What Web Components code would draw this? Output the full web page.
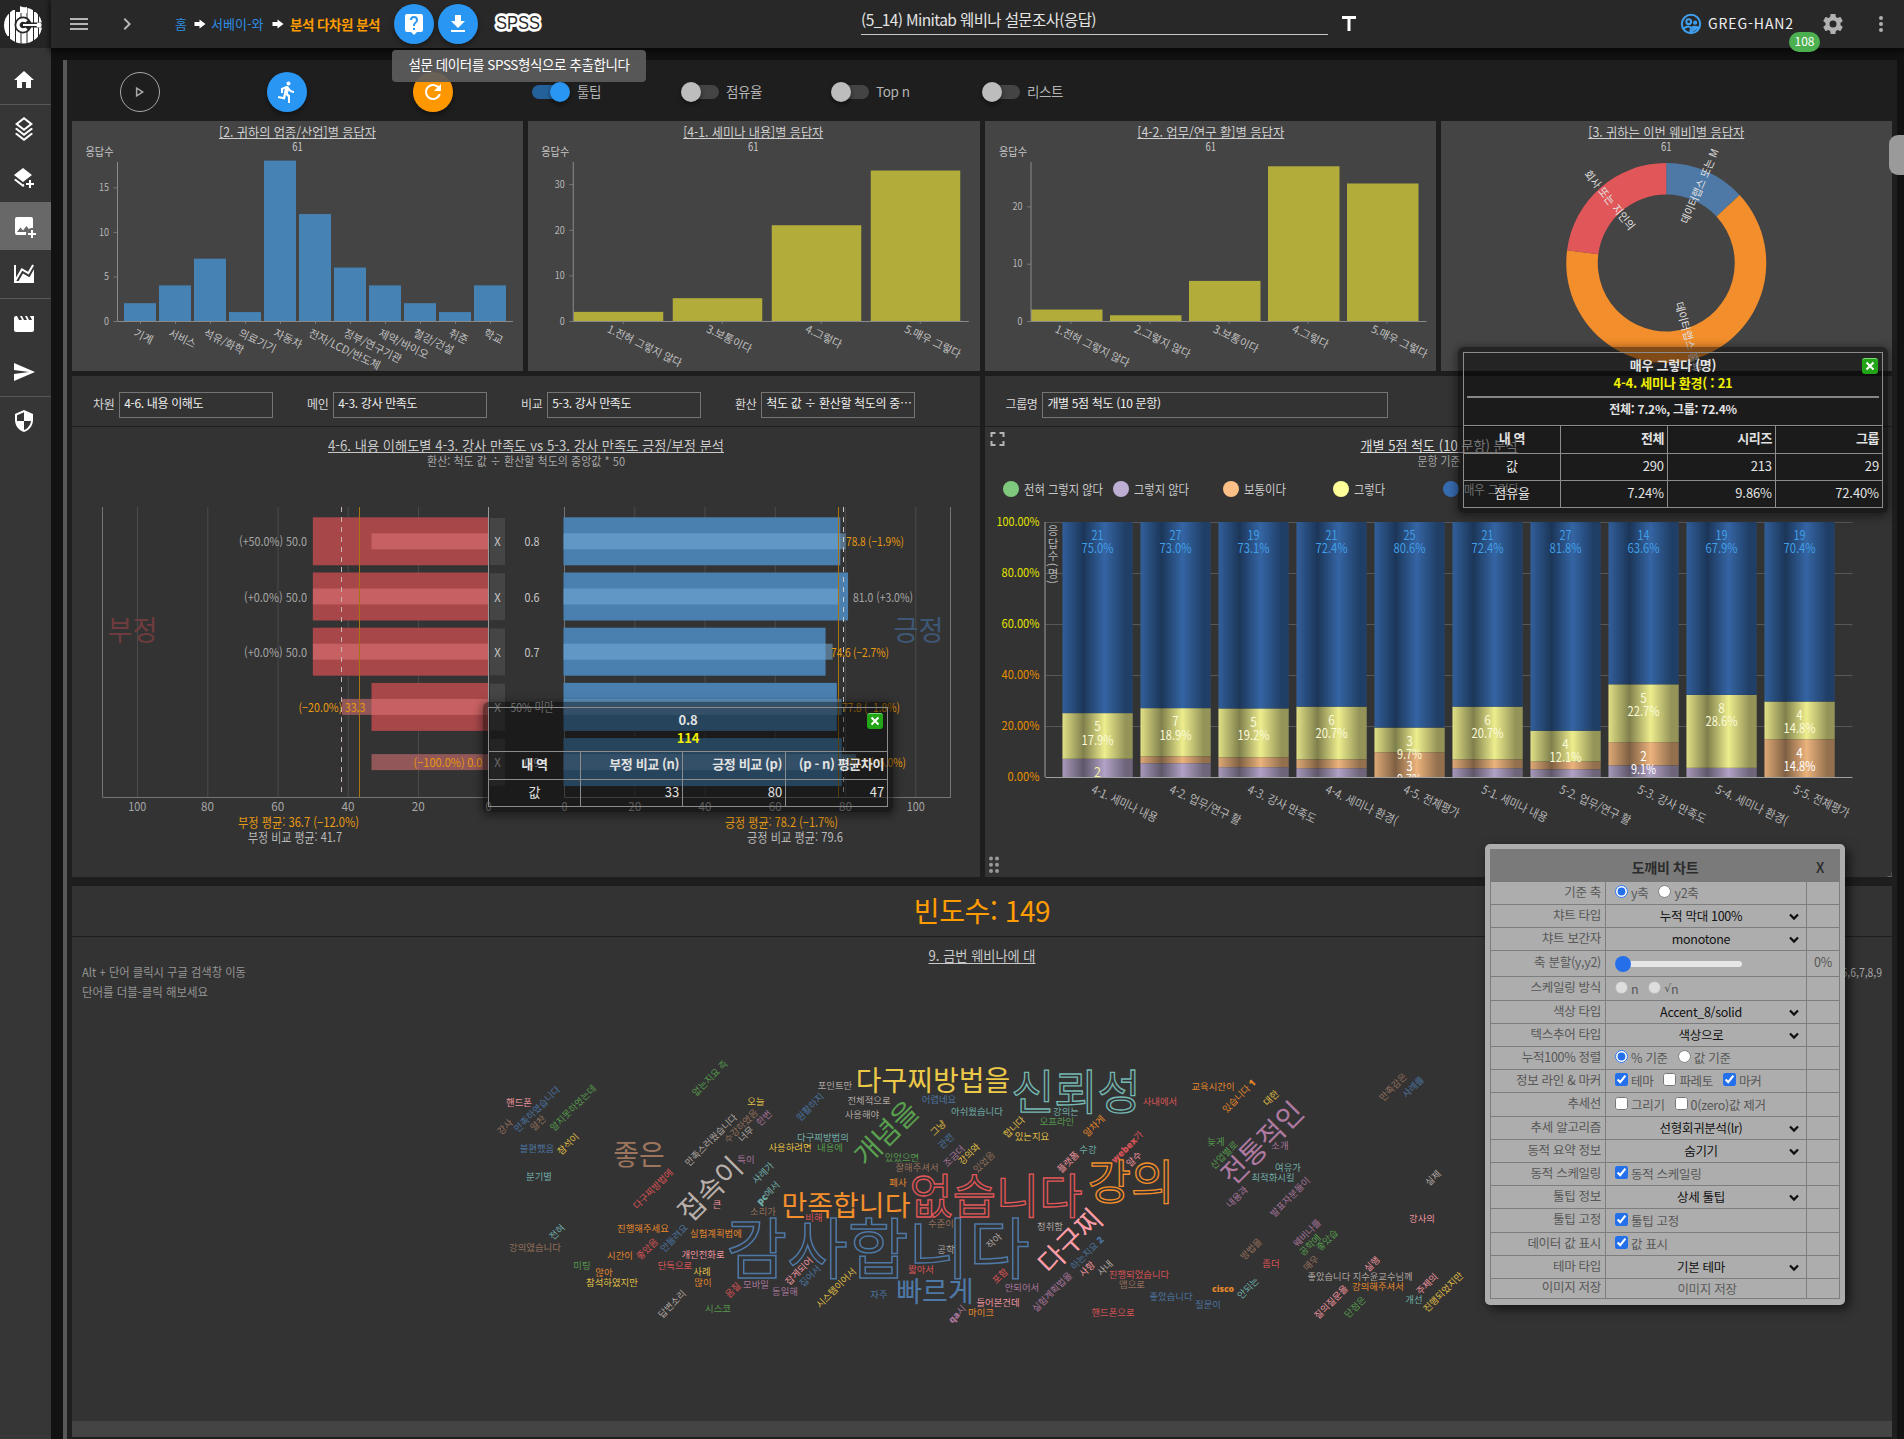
<!DOCTYPE html>
<html lang="ko">
<head>
<meta charset="utf-8">
<title>분석 다차원 분석</title>
<style>
html,body{margin:0;height:1439px;overflow:hidden;background:#121212;font-family:"Noto Sans CJK KR","Noto Sans",sans-serif;color:#fff}
</style>
</head>
<body>
<app-root></app-root>
<script>
const FONT='font-family:"Noto Sans CJK KR","Noto Sans",sans-serif;';
const ICONS={
home:'M10,20V14H14V20H19V12H22L12,3L2,12H5V20H10Z',
layers:'M12,0L3,7L4.63,8.27L12,14L19.36,8.27L21,7L12,0M12,2.53L17.74,7L12,11.47L6.26,7ZM19.37,10.73L12,16.47L4.62,10.74L3,12L12,19L21,12L19.37,10.73M19.37,15.73L12,21.47L4.62,15.74L3,17L12,24L21,17L19.37,15.73Z',
layersPlus:'M17,14H19V17H22V19H19V22H17V19H14V17H17V14M11,16L2,9L11,2L20,9L11,16M11,18.54L12,17.75V18C12,18.71 12.12,19.39 12.35,20L11,21.06L2,14.06L3.62,12.79L11,18.54Z',
imagePlus:'M5,3A2,2 0 0,0 3,5V19A2,2 0 0,0 5,21H14.09C14.03,20.67 14,20.34 14,20C14,19.32 14.12,18.64 14.35,18H5L8.5,13.5L11,16.5L14.5,12L16.73,14.97C17.7,14.34 18.84,14 20,14C20.34,14 20.67,14.03 21,14.09V5C21,3.89 20.1,3 19,3H5M19,16V19H16V21H19V24H21V21H24V19H21V16H19Z',
chart:'M17.45,15.18L22,7.31V21H2V3H4V15.54L9.5,6L16,9.78L20.24,2.45L21.97,3.45L16.74,12.5L10.23,8.75L4.31,19H6.57L10.96,11.44L17.45,15.18Z',
movie:'M18,4L20,8H17L15,4H13L15,8H12L10,4H8L10,8H7L5,4H4A2,2 0 0,0 2,6V18A2,2 0 0,0 4,20H20A2,2 0 0,0 22,18V4H18Z',
send:'M2,21L23,12L2,3V10L17,12L2,14V21Z',
shield:'M12,12H19C18.47,16.11 15.72,19.78 12,21V12H5V6.3L12,3.19M12,1L3,5V11C3,16.55 6.84,21.73 12,23C17.16,21.73 21,16.55 21,11V5L12,1Z',
menu:'M3,6H21V8H3V6M3,11H21V13H3V11M3,16H21V18H3V16Z',
chevron:'M8.59,16.58L13.17,12L8.59,7.41L10,6L16,12L10,18L8.59,16.58Z',
help:'M19,2H5A2,2 0 0,0 3,4V18A2,2 0 0,0 5,20H9L12,23L15,20H19A2,2 0 0,0 21,18V4A2,2 0 0,0 19,2M13,18H11V16H13V18M15.07,10.25L14.17,11.17C13.45,11.89 13,12.5 13,14H11V13.5C11,12.39 11.45,11.39 12.17,10.67L13.41,9.41C13.78,9.05 14,8.55 14,8A2,2 0 0,0 12,6A2,2 0 0,0 10,8H8A4,4 0 0,1 12,4A4,4 0 0,1 16,8C16,8.88 15.64,9.67 15.07,10.25Z',
download:'M5,20H19V18H5M19,9H15V3H9V9H5L12,16L19,9Z',
run:'M13.49,5.48C14.59,5.48 15.49,4.58 15.49,3.48C15.49,2.38 14.59,1.48 13.49,1.48C12.39,1.48 11.49,2.38 11.49,3.48C11.49,4.58 12.39,5.48 13.49,5.48M9.89,19.38L10.89,14.98L12.99,16.98V22.98H14.99V15.48L12.89,13.48L13.49,10.48C14.79,11.98 16.79,12.98 18.99,12.98V10.98C17.09,10.98 15.49,9.98 14.69,8.58L13.69,6.98C13.29,6.38 12.69,5.98 11.99,5.98C11.69,5.98 11.49,6.08 11.19,6.08L5.99,8.28V12.98H7.99V9.58L9.79,8.88L8.19,16.98L3.29,15.98L2.89,17.98L9.89,19.38Z',
refresh:'M17.65,6.35C16.2,4.9 14.21,4 12,4A8,8 0 0,0 4,12A8,8 0 0,0 12,20C15.73,20 18.84,17.45 19.73,14H17.65C16.83,16.33 14.61,18 12,18A6,6 0 0,1 6,12A6,6 0 0,1 12,6C13.66,6 15.14,6.69 16.22,7.78L13,11H20V4L17.65,6.35Z',
play:'M8.5,8.64L13.77,12L8.5,15.36V8.64M6.5,5V19L17.5,12',
cog:'M12,15.5A3.5,3.5 0 0,1 8.5,12A3.5,3.5 0 0,1 12,8.5A3.5,3.5 0 0,1 15.5,12A3.5,3.5 0 0,1 12,15.5M19.43,12.97C19.47,12.65 19.5,12.33 19.5,12C19.5,11.67 19.47,11.34 19.43,11L21.54,9.37C21.73,9.22 21.78,8.95 21.66,8.73L19.66,5.27C19.54,5.05 19.27,4.96 19.05,5.05L16.56,6.05C16.04,5.66 15.5,5.32 14.87,5.07L14.5,2.42C14.46,2.18 14.25,2 14,2H10C9.75,2 9.54,2.18 9.5,2.42L9.13,5.07C8.5,5.32 7.96,5.66 7.44,6.05L4.95,5.05C4.73,4.96 4.46,5.05 4.34,5.27L2.34,8.73C2.21,8.95 2.27,9.22 2.46,9.37L4.57,11C4.53,11.34 4.5,11.67 4.5,12C4.5,12.33 4.53,12.65 4.57,12.97L2.46,14.63C2.27,14.78 2.21,15.05 2.34,15.27L4.34,18.73C4.46,18.95 4.73,19.03 4.95,18.95L7.44,17.94C7.96,18.34 8.5,18.68 9.13,18.93L9.5,21.58C9.54,21.82 9.75,22 10,22H14C14.25,22 14.46,21.82 14.5,21.58L14.87,18.93C15.5,18.67 16.04,18.34 16.56,17.94L19.05,18.95C19.27,19.03 19.54,18.95 19.66,18.73L21.66,15.27C21.78,15.05 21.73,14.78 21.54,14.63L19.43,12.97Z',
dots:'M12,16A2,2 0 0,1 14,18A2,2 0 0,1 12,20A2,2 0 0,1 10,18A2,2 0 0,1 12,16M12,10A2,2 0 0,1 14,12A2,2 0 0,1 12,14A2,2 0 0,1 10,12A2,2 0 0,1 12,10M12,4A2,2 0 0,1 14,6A2,2 0 0,1 12,8A2,2 0 0,1 10,6A2,2 0 0,1 12,4Z',
title:'M5,4V7H10.5V19H13.5V7H19V4H5Z',
arrow:'M1,8H11V3L23,12L11,21V16H1Z',
full:'M5,5H10V7H7V10H5V5M14,5H19V10H17V7H14V5M17,14H19V19H14V17H17V14M10,17V19H5V14H7V17H10Z'
};
const define=(name,render)=>customElements.define(name,class extends HTMLElement{
  connectedCallback(){
    if(this.shadowRoot)return;
    this.attachShadow({mode:'open'}).innerHTML=render(this);
  }
});
const esc=s=>String(s).replace(/&/g,'&amp;').replace(/</g,'&lt;');
/* Text helper: y is the visual middle of the line, len fixes the drawn width. */
const T=(x,y,s,o={})=>{
  const fs=o.fs||12, a=o.a||'middle';
  const tr=o.rot?` transform="rotate(${o.rot} ${x} ${y})"`:'';
  return `<text x="${x}" y="${(y+fs*.37).toFixed(2)}" font-size="${fs}" text-anchor="${a}" fill="${o.f||'#c8c8c8'}"${o.w?` font-weight="${o.w}"`:''}${o.len?` textLength="${o.len}" lengthAdjust="spacingAndGlyphs"`:''}${tr}${o.x||''}>${esc(s)}</text>`;
};
const L=(x1,y1,x2,y2,c,w=1,x='')=>`<line x1="${x1}" y1="${y1}" x2="${x2}" y2="${y2}" stroke="${c}" stroke-width="${w}" ${x}/>`;
const R=(x,y,w,h,f,x2='')=>`<rect x="${x}" y="${y}" width="${w}" height="${h}" fill="${f}" ${x2}/>`;
const svgBox=(x,y,w,h,body)=>`<style>:host{display:block}svg{display:block;${FONT}}</style><svg width="${w}" height="${h}" viewBox="${x} ${y} ${w} ${h}">${body}</svg>`;

define('ui-icon',el=>{
  const s=el.getAttribute('size')||24;
  return `<style>:host{display:block;line-height:0;flex:none}</style><svg width="${s}" height="${s}" viewBox="0 0 24 24" fill="currentColor"><path fill-rule="evenodd" d="${ICONS[el.getAttribute('name')]}"/></svg>`;
});
define('round-button',()=>`<style>:host{display:flex;width:40px;height:40px;border-radius:50%;align-items:center;justify-content:center;background:var(--c,#2a96f3);color:#fff;box-shadow:0 3px 5px rgba(0,0,0,.35);box-sizing:border-box;flex:none}</style><slot></slot>`);

define('brand-logo',()=>`<style>:host{display:block;width:51px;height:48px;background:#262626}svg{display:block}</style>
<svg width="51" height="48" viewBox="0 0 51 48"><defs><clipPath id="f"><ellipse cx="23" cy="25.5" rx="19" ry="18"/></clipPath></defs>
<g clip-path="url(#f)" fill="#fff"><path d="M4 14h5v22H4zM10 10h5v32h-5zM16 12h4.500v32H16zM21.500 12h5v32h-5zM27.500 8h5.500v36h-5.500zM34 12h4v28h-4zM39 16h4v20h-4z"/></g>
<path d="M20 13V6q3 2 7 1v6z" fill="#fff"/>
<circle cx="23" cy="25" r="8.500" fill="#262626"/><path d="M26.500 21.500a5 5 0 1 0 0 7" fill="none" stroke="#fff" stroke-width="3.400"/>
<path d="M23 22.500h20v5H23z" fill="#262626"/><path d="M23 25h14" stroke="#fff" stroke-width="2"/><circle cx="39" cy="25" r="2.600" fill="#fff"/></svg>`);

define('top-bar',()=>`<style>
:host{display:flex;height:48px;background:#282828;align-items:center;box-shadow:0 2px 6px 2px rgba(0,0,0,.55);position:relative;z-index:3;${FONT}}
.left{display:flex;align-items:center;width:810px}
.menu{margin-left:16px;color:#b5b5b5}.chev{margin-left:24px;color:#b5b5b5}
.crumb{display:flex;align-items:center;margin-left:36px;font-size:13px;line-height:20px;color:#2d8de0;white-space:nowrap;width:218px}
.crumb ui-icon{color:#fff}.crumb b{color:#ff9d00;font-size:13.500px;letter-spacing:-.5px}
.btns{display:flex;gap:4px;margin-left:1px}
.spss{margin-left:11px;display:block}
.title{width:467px;height:25px;border-bottom:1px solid #c8c8c8;font-size:15.500px;line-height:20px;color:#e4e4e4;letter-spacing:-.6px;margin-top:-4px;white-space:nowrap}
.user{display:flex;align-items:center;font-size:14px;letter-spacing:.9px;color:#eee;margin-left:319px;width:118px;white-space:nowrap;gap:6px;line-height:20px}
.user span{margin-top:-2px}
.tip{position:absolute;left:341px;top:50px;width:254px;height:32px;border-radius:4px;background:rgba(92,92,92,.92);font-size:13.500px;line-height:29px;text-align:center;color:#fff;letter-spacing:-.4px;white-space:nowrap}
.badge{position:absolute;left:1738px;top:32px;width:31px;height:20px;border-radius:10px;background:#4caf50;font-size:12px;line-height:17px;text-align:center}
</style>
<div class="left"><ui-icon class="menu" name="menu"></ui-icon><ui-icon class="chev" name="chevron"></ui-icon>
<div class="crumb"><span style="width:19px">홈</span><ui-icon name="arrow" size="12"></ui-icon><span style="margin:0 6px 0 5px;width:55px;letter-spacing:0">서베이-와</span><ui-icon name="arrow" size="12"></ui-icon><b style="margin-left:6px">분석 다차원 분석</b></div>
<div class="btns"><round-button><ui-icon name="help"></ui-icon></round-button><round-button><ui-icon name="download"></ui-icon></round-button></div>
<svg class="spss" width="58" height="28" viewBox="0 0 58 28"><text x="29" y="19" text-anchor="middle" textLength="44" lengthAdjust="spacingAndGlyphs" font-family="Liberation Sans" font-size="19" fill="#282828" stroke="#fff" stroke-width="5.500" stroke-linejoin="round" paint-order="stroke">SPSS</text></svg></div>
<div class="title">(5_14) Minitab 웨비나 설문조사(응답)</div>
<ui-icon name="title" size="24" style="margin-left:9px"></ui-icon>
<div class="user"><svg width="22" height="22" viewBox="0 0 24 24" fill="none" stroke="#3f9fee" stroke-width="2.200"><circle cx="12" cy="12" r="10"/><circle cx="9.500" cy="9.500" r="2.600"/><circle cx="16.500" cy="10.500" r="1.200"/><path d="M4 17q5-4 8-1M12 22q-2-6 3-7q5 0 6 2" /><path d="M13 21q0-6 7-4" fill="#3f9fee"/></svg><span>GREG-HAN2</span></div>
<ui-icon name="cog" style="margin-left:23px;color:#b0b0b0"></ui-icon><ui-icon name="dots" style="margin-left:24px;color:#b0b0b0"></ui-icon>
<div class="tip">설문 데이터를 SPSS형식으로 추출합니다</div><div class="badge">108</div>`);

define('side-bar',()=>{
  const items=['home','|','layers','layersPlus','imagePlus*','chart','|','movie','send','|','shield'];
  return `<style>:host{display:flex;flex-direction:column;background:#363636;padding-top:8px;width:51px;box-sizing:border-box}
.i{height:48.300px;display:flex;align-items:center;justify-content:center;padding-right:3px}.on{background:#686868}hr{border:0;height:1px;background:#575757;margin:0;width:100%}</style>`+
  items.map(n=>n==='|'?'<hr>':`<div class="i${n.endsWith('*')?' on':''}"><ui-icon name="${n.replace('*','')}"></ui-icon></div>`).join('');
});

define('toggle-switch',el=>`<style>:host{display:flex;align-items:center;font-size:13.500px;color:#b4b4b4;letter-spacing:-.4px;${FONT}line-height:20px;white-space:nowrap;gap:7px}
.t{width:38px;height:20px;display:flex;align-items:center;position:relative}.k{position:absolute;left:8px;right:0;height:14px;border-radius:7px;background:#444}
.b{position:relative;width:20px;height:20px;border-radius:50%;background:#bdbdbd;box-shadow:0 2px 4px rgba(0,0,0,.5)}.l{margin-top:-3px}
:host([on]) .k{left:0;right:8px;background:#24619b}:host([on]) .b{margin-left:18px;background:#2a96f3}</style><span class="t"><span class="k"></span><span class="b"></span></span><span class="l"><slot></slot></span>`);

define('tool-row',()=>`<style>:host{display:flex;height:61px;align-items:center;padding:3px 0 0 48px;box-sizing:border-box}
.play{background:none;border:1px solid #a8a8a8;color:#a8a8a8;box-shadow:none}</style>
<round-button class="play"><ui-icon name="play" size="18"></ui-icon></round-button>
<round-button style="margin-left:107px"><ui-icon name="run"></ui-icon></round-button>
<round-button style="margin-left:106px;--c:#ff9800"><ui-icon name="refresh"></ui-icon></round-button>
<toggle-switch on style="margin-left:79px;width:149px">툴팁</toggle-switch><toggle-switch style="width:150px">점유율</toggle-switch><toggle-switch style="width:151px">Top n</toggle-switch><toggle-switch>리스트</toggle-switch>`);

const histogram=c=>{
  let s=T(c.mid,132,c.title,{fs:13,len:c.tl,f:'#cfcfcf'})+L(c.mid-c.tl/2,138.500,c.mid+c.tl/2,138.500,'#cfcfcf')+T(c.mid,146.500,'61',{fs:11.500,len:10.500});
  s+=T(c.ax-32,152,'응답수',{fs:11,a:'start',len:28});
  for(const t of c.ticks){const y=321-t*c.k;s+=L(c.ax-4,y+.5,c.ax,y+.5,'#777')+T(c.ax-8.500,y,t,{fs:10,a:'end',f:'#b8b8b8',len:t>9?10:5});}
  c.v.forEach((v,i)=>{
    const x=c.x0+i*c.step,h=v*c.k;
    s+=R(x,321-h,c.w,h,c.color)+L(c.t0+i*c.step,321,c.t0+i*c.step,324,'#777')+T(c.t0+i*c.step-c.lo,c.lo>9?328:332,c.names[i],{fs:11,a:'start',rot:26,f:'#c0c0c0',len:c.lens[i]});
  });
  return s+L(c.ax,162,c.ax,321,'#8a8a8a')+L(c.ax,321.500,c.end,321.500,'#8a8a8a');
};
define('chart-industry',()=>svgBox(72,121,451.25,250,histogram({mid:297.500,title:'[2. 귀하의 업종/산업]별 응답자',tl:157,ax:117.500,ticks:[0,5,10,15],k:8.91,v:[2,4,7,1,18,12,6,4,2,1,4],x0:124,step:35,w:32,t0:140.500,lo:6,end:513,color:'#4682b4',names:['기계','서비스','석유/화학','의료기기','자동차','전자/LCD/반도체','정부/연구기관','제약/바이오','철강/건설','취준','학교'],lens:[20,29,43,40,30,78,63,54,43,20,20]})));
define('chart-seminar',()=>svgBox(528.25,121,451.25,250,histogram({mid:753.500,title:'[4-1. 세미나 내용]별 응답자',tl:140,ax:573.500,ticks:[0,10,20,30],k:4.56,v:[2,5,21,33],x0:574,step:99,w:89.500,t0:623.500,lo:15,end:969,color:'#b2ad3a',names:['1.전혀 그렇지 않다','3.보통이다','4.그렇다','5.매우 그렇다'],lens:[81,49,39,61]})));
define('chart-work',()=>svgBox(984.5,121,451.25,250,histogram({mid:1210.300,title:'[4-2. 업무/연구 활]별 응답자',tl:147,ax:1030.500,ticks:[0,10,20],k:5.73,v:[2,1,7,27,24],x0:1030.500,step:79,w:71.500,t0:1070.500,lo:15,end:1426,color:'#b2ad3a',names:['1.전혀 그렇지 않다','2.그렇지 않다','3.보통이다','4.그렇다','5.매우 그렇다'],lens:[81,61,49,39,61]})));
define('chart-donut',()=>{
  const cx=1666,cy=263,ro=100,ri=68.5,n=61;let a=0,s='';
  const P=(t,r)=>{const q=t/n*2*Math.PI;return `${(cx+r*Math.sin(q)).toFixed(2)} ${(cy-r*Math.cos(q)).toFixed(2)}`};
  for(const [v,c] of [[8,'#4e79a7'],[39,'#f28e2b'],[14,'#e15759']]){
    const b=a+v,l=v>n/2?1:0;
    s+=`<path fill="${c}" d="M${P(a,ro)}A${ro} ${ro} 0 ${l} 1 ${P(b,ro)}L${P(b,ri)}A${ri} ${ri} 0 ${l} 0 ${P(a,ri)}Z"/>`;a=b;
  }
  s+=T(1666,132,'[3. 귀하는 이번 웨비]별 응답자',{fs:13,len:156,f:'#cfcfcf'})+L(1588,138.5,1744,138.5,'#cfcfcf')+T(1666,146.5,'61',{fs:11.5,len:10.5});
  s+=T(1699.5,186,'데이터랩스 또는 M',{fs:11,rot:-67,f:'#e0e0e0',len:80})+T(1609.5,200,'회사 또는 지인의',{fs:11,rot:51,f:'#e0e0e0',len:73})+T(1688,337,'데이터랩스 홈페',{fs:11,rot:75,f:'#e0e0e0',len:72});
  return svgBox(1440.75,121,451.25,250,s);
});

define('filter-field',el=>`<style>:host{display:flex;align-items:center;gap:5px;font-size:12px;color:#d8d8d8;letter-spacing:-.4px;white-space:nowrap;${FONT}}
label{line-height:20px;margin-top:-2px}div{box-sizing:border-box;height:26px;border:1px solid #757575;padding:0 4px;line-height:20px;color:#eee;letter-spacing:-.35px;width:${el.getAttribute('w')}px}</style><label>${el.getAttribute('label')}</label><div><slot></slot></div>`);

define('chart-diverging',()=>{
  const k=3.513,x0=488.5,r0=564.5,O='#e69a12';let s='';
  s+=T(526,446,'4-6. 내용 이해도별 4-3. 강사 만족도 vs 5-3. 강사 만족도 긍정/부정 분석',{fs:14,len:396})+L(328,452.5,724,452.5,'#c8c8c8');
  s+=T(526,461.5,'환산: 척도 값 ÷ 환산할 척도의 중앙값 * 50',{fs:12,len:198,f:'#a6a6a6'});
  for(const g of [20,40,60,80,100]) s+=L(x0-g*k+.3,507,x0-g*k+.3,797,'#4b4b4b')+L(r0+g*k,507,r0+g*k,797,'#4b4b4b');
  s+=L(102.5,507,102.5,797,'#757575')+L(102.5,797.5,488.5,797.5,'#757575')+L(564.5,507,564.5,797,'#757575')+L(564.5,797.5,951,797.5,'#757575')+L(950.5,507,950.5,797,'#757575');
  const rows=[['0.8',50,33.3,78.8,80.3,'(+50.0%) 50.0','78.8 (−1.9%)',846],['0.6',50,50,81,78.5,'(+0.0%) 50.0','81.0 (+3.0%)',853],['0.7',50,50,74.6,76.6,'(+0.0%) 50.0','74.6 (−2.7%)',831],['50% 미만',33.3,41.7,77.8,79.2,'(−20.0%) 33.3','77.8 (−1.8%)',842],['0.9',0,33.3,79.2,83.3,'(−100.0%) 0.0','79.2 (−5.0%)',848]];
  rows.forEach((r,i)=>{const y=517.3+i*55.2;
    s+=R(x0-r[1]*k,y,r[1]*k,48,'#a8474a')+R(x0-r[2]*k,y+16,r[2]*k,16,'#e07576','opacity=".55"');
    s+=R(563.5,y,r[3]*k,48,'#4a80b0')+R(563.5,y+16,r[4]*k,16,'#75aad6','opacity=".55"');
    s+=R(490,y+.7,15,47,'#454545');
  });
  s+=L(488.5,507,488.5,797,'#9a9a9a');
  s+=L(341.5,507,341.5,797,'#c9b4b4',1,'stroke-dasharray="5 5"')+L(359.5,507,359.5,797,'#a87412')+L(843.5,507,843.5,797,'#c9c9c9',1,'stroke-dasharray="5 5"')+L(838.5,507,838.5,797,'#a87412');
  rows.forEach((r,i)=>{const y=542+i*55.2,neg=i>2;
    s+=T([307,307,307,365.5,482.5][i],y,r[5],{fs:12,a:'end',f:neg?O:'#a6a6a6',len:[68,63,63,67,69][i]});
    s+=T(r[7],y,r[6],{fs:12,a:'start',f:i==1?'#a6a6a6':O,len:i==1?60:58});
    s+=T(497.5,y,'X',{fs:12,len:6.5})+T(532,y,r[0],{fs:12,len:i==3?43:15});
  });
  for(const g of [0,20,40,60,80,100]) s+=T(x0-g*k,807,g,{fs:12,f:'#a6a6a6',len:g==100?18:g?13:6})+T(r0+g*k,807,g,{fs:12,f:'#a6a6a6',len:g==100?18:g?13:6});
  s+=T(359,822.5,'부정 평균: 36.7 (−12.0%)',{fs:13,a:'end',f:O,len:121})+T(342,837.5,'부정 비교 평균: 41.7',{fs:13,a:'end',f:'#b8b8b8',len:94});
  s+=T(838,822.5,'긍정 평균: 78.2 (−1.7%)',{fs:13,a:'end',f:O,len:113})+T(843,837.5,'긍정 비교 평균: 79.6',{fs:13,a:'end',f:'#b8b8b8',len:96});
  s+=T(132.5,631,'부정',{fs:28,f:'#6e3c3e',len:50})+T(918.5,631,'긍정',{fs:28,f:'#3d5775',len:50});
  return svgBox(72,427,907.5,450,s);
});

define('chart-stacked',()=>{
  let s='<defs><clipPath id="p"><rect x="1044" y="500" width="820" height="277"/></clipPath><linearGradient id="s"><stop offset="0" stop-opacity=".12"/><stop offset=".3" stop-opacity=".5"/><stop offset=".6" stop-opacity=".07"/><stop offset=".9" stop-opacity=".42"/><stop offset="1" stop-opacity=".42"/></linearGradient></defs>';
  s+=T(1438.5,445.5,'개별 5점 척도 (10 문항) 분석',{fs:14,len:157,f:'#dcdcdc'})+L(1360,452.5,1517,452.5,'#dcdcdc')+T(1438.5,461.5,'문항 기준',{fs:12,len:43,f:'#a6a6a6'});
  const C=['#7fc97f','#beaed4','#fdc086','#ffff99','#386cb0'];
  ['전혀 그렇지 않다','그렇지 않다','보통이다','그렇다','매우 그렇다'].forEach((n,i)=>{s+=`<circle cx="${1010.5+110*i}" cy="489" r="8" fill="${C[i]}"/>`+T(1023.5+110*i,489,n,{fs:13,a:'start',len:[79,55,42,31,55][i]});});
  for(let g=0;g<=5;g++){const y=777-g*51;s+=L(1045,y+.5,1852,y+.5,g?'#575757':'#a0a0a0')+T(1039,y,(g*20)+'.00%',{fs:12,a:'end',f:g>2?'#e3e300':'#e69000',len:g==5?43:g?38:32});}
  s+=L(1044.5,522,1044.5,777,'#a0a0a0');
  s+=`<text x="1052.500" y="525" font-size="11.500" fill="#b5b5b5" style="writing-mode:vertical-rl" textLength="59">응답수(명)</text>`;
  const D=[[7.15,0,17.9,'21','75.0%','5','17.9%'],[5.4,2.7,18.9,'27','73.0%','7','18.9%'],[3.85,3.85,19.2,'19','73.1%','5','19.2%'],[3.45,3.45,20.7,'21','72.4%','6','20.7%'],[0,9.7,9.7,'25','80.6%','3','9.7%'],[3.45,3.45,20.7,'21','72.4%','6','20.7%'],[3.03,3.03,12.1,'27','81.8%','4','12.1%'],[4.55,9.1,22.7,'14','63.6%','5','22.7%'],[3.6,0,28.6,'19','67.9%','8','28.6%'],[0,14.8,14.8,'19','70.4%','4','14.8%']];
  const N=['세미나 내용','업무/연구 활','강사 만족도','세미나 환경(','전체평가'],NL=[71,77,74,78,60];
  D.forEach((d,i)=>{const x=1062+78*i,m=x+35,h=d.slice(0,3).map(v=>v*2.55),y3=777-h[0]-h[1]-h[2];
    s+=R(x,777-h[0],70,h[0],C[1])+R(x,777-h[0]-h[1],70,h[1],C[2])+R(x,y3,70,h[2],C[3])+R(x,522,70,y3-522,C[4])+R(x,522,70,255,'url(#s)');
    const pair=(y,a,b,f)=>T(m,y+13.7,a,{fs:12.5,f,len:a.length>1?12:6.5})+T(m,y+26.8,b,{fs:12.5,f,len:b.length>4?32:25});
    s+='<g clip-path="url(#p)">'+pair(522,d[3],d[4],'#409fe6')+pair(y3,d[5],d[6],'#fbfbd8');
    if(i==0)s+=T(m,772.5,'2',{fs:12.5,f:'#f3f3a0'});
    if(i==4)s+=pair(752.3,'3','9.7%','#fff');
    if(i==7)s+=pair(742.2,'2','9.1%','#fff');
    if(i==9)s+=pair(739.3,'4','14.8%','#fff');
    s+='</g>'+T(m-5,788.5,`${i<5?4:5}-${i%5+1}. ${N[i%5]}`,{fs:12,a:'start',rot:25,f:'#b5b5b5',len:NL[i%5]});
  });
  for(const x of [990.5,996.5])for(const y of [858.6,864.8,871])s+=`<circle cx="${x}" cy="${y}" r="2" fill="#999"/>`;
  s+=`<g transform="translate(985 427)" fill="#b5b5b5"><path d="${ICONS.full}"/></g><path d="M1887 876.500h4.500v-4" stroke="#666" fill="none"/>`;
  return svgBox(984.5,427,907.5,450,s);
});

define('word-cloud',()=>{
  const C={b:'#4e79a7',o:'#f28e2b',r:'#e15759',t:'#76b7b2',g:'#59a14f',y:'#edc949',p:'#af7aa1',k:'#ff9da7',n:'#9c755f',a:'#bab0ab'};
  const W=`감사합니다|878|1249|b||66
없습니다|996|1196|r||47
신뢰성|1076|1092|t||47
강의|1131|1182|o||47
좋은|639|1155|n||28
접속이|710|1189|a|/|28
만족합니다|846|1206|o||28
다구찌방법을|933|1081|y||28
개념을|886|1133|g|/|28
다구찌|1070|1241|k|/|28
빠르게|935|1292|b||28
전통적인|1262|1143|p|/|28
없는지요 즉|710|1078|g|/
핸드폰|519|1103|k
강사|505|1127|n|/
만족하였습니다|537|1109|b|/
알찬|538|1123|n|/
알지못하였는데|573|1108|g|/
불편했음|537|1149|b
참석이|568|1144|y|/
분기별|539|1177|t
다구찌방법에|653|1189|r|/
만족스러웠습니다|711|1140|a|/
수강하였음|741|1126|n|/
한번|764|1118|p|/
너무|746|1134|a|/
오늘|756|1102|y
특이|746|1160|p
사례가|763|1173|t|/
pc에서|768|1193|t|/
큰|717|1205|k
소리가|763|1212|n
비해|814|1218|r
진행해주세요|643|1229|o
안들려요|674|1238|b|/
실험계획법에|716|1234|o
전혀|557|1232|t|/
강의였습니다|535|1248|n
좋았음|647|1249|r|/
시간이|620|1256|o
개인전화로|703|1255|k
단독으로|675|1266|r
미팅|582|1266|g
않아|604|1273|o
참석하였지만|612|1283|y
사례|702|1272|y
많이|703|1283|o
음질|733|1290|r|/
모바일|756|1285|p
동일해|785|1292|p
잡게되어|799|1271|k|/
집어서|810|1276|b|/
답변소리|672|1304|a|/
시스코|718|1309|g
포인트만|835|1086|a
원활하지|810|1107|b|/
전체적으로|869|1101|a
사용해야|862|1115|a
어렵네요|939|1100|b
아쉬웠습니다|977|1112|t
강의는|1066|1112|t
오프라인|1057|1122|g
다구찌방법의|823|1138|t
내용에|830|1148|g
사용하려면|790|1148|y
있었으면|902|1158|g
잘해주셔서|917|1168|n
그냥|938|1128|y|/
관련|946|1141|b|/
조금더|954|1156|p|/
강의와|969|1154|y|/
있었음|984|1162|n|/
합니다|1014|1127|y|/
있는지요|1032|1137|y
알차게|1094|1126|o|/
수강|1088|1150|t
플랫폼|1068|1162|k|/
webex가|1127|1147|r|/
알수|1134|1159|k|/
폐사|898|1183|o
수준이|941|1224|n
공학|946|1250|a
작아|994|1241|a|/
청취함|1050|1227|a
하는지요 2|1087|1253|b|/
사항|1087|1269|k|/
사내|1105|1268|a|/
짧아서|921|1270|r
포함|1000|1276|r|/
자주|879|1295|b
안되어서|1022|1288|p
실험계획법을|1052|1292|p|/
들어본건데|998|1303|k
마이크|981|1313|o
qa시|957|1314|p|/
시스템이어서|836|1288|y|/
핸드폰으로|1113|1313|r
진행되었습니다|1139|1275|r
앱으로|1132|1285|n
사내에서|1160|1102|r
교육시간이|1213|1087|o
있습니다 1|1239|1096|o|/
대한|1271|1098|y|/
늦게|1216|1142|g
산업별로|1224|1155|g|/
소개|1280|1146|p
여유가|1288|1168|t
최적화시킬|1273|1178|t
내용과|1237|1197|p|/
발표자분들이|1290|1197|p|/
만족감은|1393|1087|n|/
사례를|1413|1087|b|/
실제|1433|1178|a|/
강사의|1422|1219|k
웨비나를|1307|1233|p|/
공학에|1310|1245|g|/
좋았습|1327|1240|g|/
매우|1311|1263|n|/
방법을|1251|1249|n|/
좀더|1271|1264|r
실행|1372|1264|k|/
좋았습니다 지수윤교수님께|1360|1277|a
강의해주셔서|1378|1287|o
주제의|1427|1284|k|/
진행되었지만|1443|1292|y|/
개선|1414|1300|t
질의질문을|1331|1302|k|/
단점은|1355|1307|g|/
안되는|1248|1288|t|/
cisco|1223|1289|o
좋았습니다|1171|1297|b
질문이|1208|1305|b`;
  let s=T(982,956,'9. 금번 웨비나에 대',{fs:14,len:107})+L(928.5,963.5,1035.500,963.5,'#c8c8c8');
  s+=T(82,972.5,'Alt + 단어 클릭시 구글 검색창 이동',{fs:12,a:'start',f:'#959595',len:164})+T(82,992.5,'단어를 더블-클릭 해보세요',{fs:12,a:'start',f:'#959595',len:126})+T(1882,972.5,'nullvalue,없음,값없음,0,1,2,3,4,5,6,7,8,9',{fs:12,a:'end',f:'#a6a6a6',len:185});
  for(const l of W.split('\n')){
    const [t,x,y,c,r,f]=l.split('|'),fs=+(f||9.4),big=fs>40;
    const wide={'좋았습니다 지수윤교수님께':105,'cisco':22}[t];
    const body=esc(t).replace(/(webex|qa|pc|cisco| [12])/,'<tspan font-weight="900" font-family="Open Sans">$1</tspan>');
    s+=T(+x,+y,'@',{fs,f:big?'none':C[c],len:wide,rot:r?-45:0,x:big?` stroke="${C[c]}" stroke-width="${fs>60?1.5:1.3}" paint-order="stroke"`:fs>20?` font-weight="400"`:` font-weight="400" opacity=".92"`}).replace('>@<','>'+body+'<');
  }
  return svgBox(72,937,1820,484,s);
});

define('close-box',()=>`<style>:host{display:block;position:absolute;right:4px;top:5px;width:16px;height:16px;border-radius:3px;background:#22a516;border-top:1px solid #7fd87a;box-sizing:border-box}svg{display:block;margin-top:-1px}</style><svg width="16" height="16" viewBox="0 0 16 16"><path d="M4.500 4.500l7 7M11.500 4.500l-7 7" stroke="#fff" stroke-width="2"/></svg>`);
define('data-tip',el=>{
  const rows=JSON.parse(el.getAttribute('rows')),cols=el.getAttribute('cols');
  return `<style>:host{display:block;position:absolute;background:rgba(0,0,0,.47);border-radius:6px;box-shadow:0 2px 8px 2px rgba(0,0,0,.4);padding:5px;box-sizing:border-box;${FONT}z-index:2;font-size:13px;color:#e2e2e2}
.w{border:1px solid #8c8c8c;position:relative;height:100%;box-sizing:border-box;display:flex;flex-direction:column}
.h{text-align:center;font-weight:700;flex:1;line-height:18px;padding-top:3px;letter-spacing:-.25px}
.r{display:grid;grid-template-columns:${cols};border-top:1px solid #8c8c8c;height:27px;box-sizing:border-box;line-height:24px}
.r span{text-align:right;padding-right:3px;border-left:1px solid #8c8c8c;white-space:nowrap;letter-spacing:-.1px}.r span:first-child{border:0;text-align:center;padding-right:0}
.r.b{font-weight:700;height:28px}.r.b span{letter-spacing:-.4px}
::slotted(.y){color:#efef00;display:block}::slotted(.d){display:block;border-top:2px solid #868686;margin:4px 3px 0;line-height:22px;font-size:12px}</style>
<div class="w"><close-box></close-box><div class="h"><slot></slot></div>${rows.map((r,i)=>`<div class="r${i?'':' b'}">${r.map(c=>`<span>${c}</span>`).join('')}</div>`).join('')}</div>`;
});

define('settings-panel',()=>{
  const sel=t=>`<div class="sel"><span>${t}</span><svg width="12" height="8" viewBox="0 0 12 8"><path d="M2 1.500l4 4 4-4" fill="none" stroke="#111" stroke-width="2.300"/></svg></div>`;
  const inp=(k,t,c,m,d)=>`<label style="margin-right:${m||10}px"><input type="${k}" ${c?'checked':''} ${d?'disabled':''}>${t}</label>`;
  const rows=[['기준 축',inp('radio','y축',1)+inp('radio','y2축'),23],['챠트 타입',sel('누적 막대 100%'),23],['챠트 보간자',sel('monotone'),23],['축 분할(y,y2)','<div class="rg"><i></i></div>',26,'0%'],['스케일링 방식',inp('radio','n',0,10,1)+inp('radio','<span style="font-family:DejaVu Sans;font-size:11px">√</span>n',0,9,1),24],['색상 타입',sel('Accent_8/solid'),23],['텍스추어 타입',sel('색상으로'),23],['누적100% 정렬',inp('radio','% 기준',1)+inp('radio','값 기준'),23],['정보 라인 &amp; 마커',inp('checkbox','테마',1)+inp('checkbox','파레토')+inp('checkbox','마커',1),23],['추세선',inp('checkbox','그리기')+inp('checkbox','0(zero)값 제거'),24],['추세 알고리즘',sel('선형회귀분석(lr)'),23],['동적 요약 정보',sel('숨기기'),23],['동적 스케일링',inp('checkbox','동적 스케일링',1),23],['툴팁 정보',sel('상세 툴팁'),23],['툴팁 고정',inp('checkbox','툴팁 고정',1),24],['데이터 값 표시',inp('checkbox','값 표시',1),23],['테마 타입',sel('기본 테마'),23],['이미지 저장','<div class="sel" style="color:#5a5a5a"><span>이미지 저장</span></div>',20]];
  return `<style>:host{display:block;position:absolute;left:1485px;top:844px;width:360px;height:461px;box-sizing:border-box;padding:5px;border-radius:5px;background:rgba(178,178,178,.97);box-shadow:4px 4px 12px rgba(0,0,0,.6);${FONT}z-index:2;font-size:12.500px;color:#575757;letter-spacing:-.3px}
.hd{height:33px;background:#7a7a7a;color:#2b2b2b;font-weight:700;font-size:14px;line-height:36px;text-align:center;position:relative}
.hd b{position:absolute;right:16px;top:0;font-weight:500}
.tb{border:1px solid #7d7d7d;border-top:0;border-bottom:0}
.r{display:grid;grid-template-columns:114px 1fr 33px;border-bottom:1px solid #7d7d7d;box-sizing:border-box;background:rgba(173,173,173,.96)}
.r>*{border-left:1px solid #7d7d7d;display:flex;align-items:center;min-width:0;white-space:nowrap;line-height:16px}
.r>:first-child{border:0;justify-content:flex-end;padding:0 4px 3px 0}.m{padding-left:9px}.e{justify-content:center;padding-bottom:3px}
.sel{flex:1;display:flex;align-items:center;color:#111;margin-left:-9px;padding-right:6px;height:16px}.sel span{flex:1;text-align:center;margin-left:8px}.sel svg{margin-top:2px}
label{display:flex;align-items:center}input{margin:0 3px 3px 0;width:13px;height:13px;accent-color:#246fea}
.rg{width:127px;height:6px;border-radius:3px;background:#e6e6e6;display:flex;align-items:center}.rg i{width:16px;height:16px;border-radius:50%;background:#2570ea;flex:none}</style>
<div class="hd">도깨비 차트<b>X</b></div><div class="tb">${rows.map(r=>`<div class="r" style="height:${r[2]}px"><div>${r[0]}</div><div class="m">${r[1]}</div><div class="e">${r[3]||''}</div></div>`).join('')}</div>`;
});

define('dash-board',()=>`<style>
:host{display:flex;flex-direction:column;background:#1e1e1e;border-left:4px solid #585858;margin:12px 7px 0 12px;padding:0 5px;height:1379px;box-sizing:border-box}
.four{display:grid;grid-template-columns:repeat(4,1fr);gap:5px;height:250px}.four>*{background:#444}
.two{display:grid;grid-template-columns:1fr 1fr;column-gap:5px;margin-top:5px;height:501px}
.p{background:#333}.f{height:51px;border-bottom:1px solid #1e1e1e;display:flex;align-items:center;padding:8px 0 0 21px;box-sizing:border-box}
.last{margin-top:9px;background:#333}.n{height:50px;line-height:48px;text-align:center;font-size:28px;color:#ff9d00;letter-spacing:-.4px;border-bottom:1px solid #1e1e1e;${FONT}}
.bar{height:16px;background:#444}</style>
<tool-row></tool-row>
<div class="four"><chart-industry></chart-industry><chart-seminar></chart-seminar><chart-work></chart-work><chart-donut></chart-donut></div>
<div class="two"><section class="p"><div class="f"><filter-field label="차원" w="154" style="width:214px">4-6. 내용 이해도</filter-field><filter-field label="메인" w="154" style="width:214px">4-3. 강사 만족도</filter-field><filter-field label="비교" w="154" style="width:214px">5-3. 강사 만족도</filter-field><filter-field label="환산" w="154">척도 값 ÷ 환산할 척도의 중⋯</filter-field></div><chart-diverging></chart-diverging></section>
<section class="p"><div class="f"><filter-field label="그룹명" w="346">개별 5점 척도 (10 문항)</filter-field></div><chart-stacked></chart-stacked></section></div>
<section class="last"><div class="n">빈도수: 149</div><word-cloud></word-cloud><div class="bar"></div></section>`);

define('app-root',()=>`<style>:host{display:grid;grid-template-columns:51px 1fr;grid-template-rows:48px 1391px;width:1904px;height:1439px;position:relative;overflow:hidden}
.thumb{position:absolute;left:1889px;top:135px;width:24px;height:40px;border-radius:9px;background:#9a9a9a}</style>
<brand-logo></brand-logo><top-bar></top-bar><side-bar></side-bar><dash-board></dash-board>
<data-tip style="left:1458px;top:347px;width:430px;height:166px" cols="96px 107px 108px 107px" rows='[["내 역","전체","시리즈","그룹"],["값","290","213","29"],["점유율","7.24%","9.86%","72.40%"]]'>매우 그렇다 (명)<span class="y">4-4. 세미나 환경( : 21</span><span class="d">전체: 7.2%, 그룹: 72.4%</span></data-tip>
<data-tip style="left:483px;top:702px;width:410px;height:110px" cols="91px 102px 103px 102px" rows='[["내 역","부정 비교 (n)","긍정 비교 (p)","(p - n) 평균차이"],["값","33","80","47"]]'>0.8<span class="y">114</span></data-tip>
<settings-panel></settings-panel><div class="thumb"></div>`);
</script>
</body>
</html>
